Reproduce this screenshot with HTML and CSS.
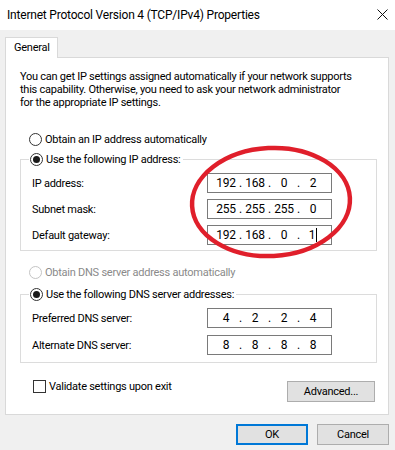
FILE: index.html
```html
<!DOCTYPE html>
<html lang="en">
<head>
    <meta charset="UTF-8">
    <title>Internet Protocol Version 4 (TCP/IPv4) Properties</title>
    <link rel="stylesheet" href="styles.css">
</head>
<body>
    <div class="window">
        <div class="titlebar">
            <span class="title">Internet Protocol Version 4 (TCP/IPv4) Properties</span>
            <svg class="close" width="11" height="11" viewBox="0 0 11 11">
                <path d="M0.5 0.5 L10.5 10.5 M10.5 0.5 L0.5 10.5" stroke="#111" stroke-width="1" fill="none"/>
            </svg>
        </div>

        <div class="content">
            <div class="tabs">
                <div class="tab">General</div>
            </div>

            <div class="panel">
                <p class="intro">You can get IP settings assigned automatically if your network supports<br>this capability. Otherwise, you need to ask your network administrator<br>for the appropriate IP settings.</p>

                <div class="radio-row first">
                    <span class="radio"></span>
                    <span>Obtain an IP address automatically</span>
                </div>

                <fieldset class="group ip-group">
                    <legend class="radio-row">
                        <span class="radio checked"></span>
                        <span>Use the following IP address:</span>
                    </legend>
                    <div class="field-row">
                        <span class="field-label">IP address:</span>
                        <div class="ip-box">
                            <span class="octet">192</span><span class="dot">.</span><span class="octet">168</span><span class="dot">.</span><span class="octet">0</span><span class="dot">.</span><span class="octet">2</span>
                        </div>
                    </div>
                    <div class="field-row">
                        <span class="field-label">Subnet mask:</span>
                        <div class="ip-box">
                            <span class="octet">255</span><span class="dot">.</span><span class="octet">255</span><span class="dot">.</span><span class="octet">255</span><span class="dot">.</span><span class="octet">0</span>
                        </div>
                    </div>
                    <div class="field-row">
                        <span class="field-label">Default gateway:</span>
                        <div class="ip-box">
                            <span class="octet">192</span><span class="dot">.</span><span class="octet">168</span><span class="dot">.</span><span class="octet">0</span><span class="dot">.</span><span class="octet"><span class="caret">1</span></span>
                        </div>
                    </div>
                </fieldset>

                <div class="radio-row disabled dns-auto">
                    <span class="radio"></span>
                    <span>Obtain DNS server address automatically</span>
                </div>

                <fieldset class="group dns-group">
                    <legend class="radio-row">
                        <span class="radio checked"></span>
                        <span>Use the following DNS server addresses:</span>
                    </legend>
                    <div class="field-row">
                        <span class="field-label">Preferred DNS server:</span>
                        <div class="ip-box">
                            <span class="octet">4</span><span class="dot">.</span><span class="octet">2</span><span class="dot">.</span><span class="octet">2</span><span class="dot">.</span><span class="octet">4</span>
                        </div>
                    </div>
                    <div class="field-row">
                        <span class="field-label">Alternate DNS server:</span>
                        <div class="ip-box">
                            <span class="octet">8</span><span class="dot">.</span><span class="octet">8</span><span class="dot">.</span><span class="octet">8</span><span class="dot">.</span><span class="octet">8</span>
                        </div>
                    </div>
                </fieldset>

                <div class="panel-footer">
                    <div class="check-row">
                        <span class="checkbox"></span>
                        <span>Validate settings upon exit</span>
                    </div>
                    <button class="btn advanced">Advanced...</button>
                </div>
            </div>

            <div class="actions">
                <button class="btn default">OK</button>
                <button class="btn">Cancel</button>
            </div>
        </div>

        <!-- red marker drawn over the static address fields -->
        <svg class="marker" width="395" height="450" viewBox="0 0 395 450">
            <ellipse cx="271" cy="202" rx="79" ry="54" fill="none" stroke="#e01f2b" stroke-width="4.5" transform="rotate(-3 271 202)"/>
        </svg>
    </div>
</body>
</html>
```

FILE: styles.css
```css
body {
    margin: 0;
    font-family: Roboto, "Noto Sans", sans-serif;
    font-size: 11px;
    letter-spacing: -0.25px;
    color: #000;
    background: #f0f0f0;
}
.window {
    position: relative;
    width: 395px;
    height: 450px;
    background: #f0f0f0;
    overflow: hidden;
}
.titlebar {
    height: 30px;
    background: #fff;
    display: flex;
    align-items: center;
    justify-content: space-between;
    padding: 0 7px;
}
.title {
    font-size: 12px;
    letter-spacing: -0.2px;
    line-height: 16px;
}
.close {
    margin-top: -1px;
}
.content {
    padding: 7px 6px 0 5px;
}
.tabs {
    display: flex;
}
.tab {
    position: relative;
    z-index: 1;
    height: 20px;
    line-height: 20px;
    padding: 0 7px 0 8px;
    border: 1px solid #d9d9d9;
    border-bottom: none;
    background: #fff;
    margin-bottom: -1px;
}
.panel {
    box-sizing: border-box;
    height: 358px;
    background: #fff;
    border: 1px solid #d9d9d9;
    padding: 12px 11px 0 14px;
}
.intro {
    margin: 0;
    line-height: 13px;
    white-space: nowrap;
}
.radio-row {
    display: flex;
    align-items: center;
    gap: 3px;
    height: 16px;
}
.radio-row.first {
    margin: 22px 0 4px 9px;
}
.radio {
    box-sizing: border-box;
    width: 13px;
    height: 13px;
    border: 1px solid #333;
    border-radius: 50%;
    display: flex;
    align-items: center;
    justify-content: center;
    background: #fff;
}
.radio.checked::after {
    content: "";
    width: 7px;
    height: 7px;
    border-radius: 50%;
    background: #1a1a1a;
}
.radio-row.disabled {
    color: #8a8a8a;
}
.radio-row.disabled .radio {
    border-color: #c4c4c4;
}
.dns-auto {
    margin: 13px 0 6px 9px;
}
.group {
    margin: 0;
    border: 1px solid #dcdcdc;
    padding: 6px 0 5px 8px;
    width: 357px;
    box-sizing: border-box;
}
.group legend {
    padding: 0 2px 0 1px;
}
.dns-group {
    padding-bottom: 7px;
}
.field-row {
    display: flex;
    align-items: center;
    padding-left: 3px;
    height: 20px;
}
.field-row + .field-row {
    margin-top: 6px;
}
.dns-group .field-row + .field-row {
    margin-top: 7px;
}
.field-label {
    width: 175px;
}
.ip-box {
    box-sizing: border-box;
    width: 125px;
    height: 20px;
    border: 1px solid #7a7a7a;
    display: flex;
    align-items: center;
    padding-left: 7px;
    font-size: 12px;
}
.octet {
    width: 22px;
    text-align: center;
}
.dot {
    width: 7px;
    text-align: center;
}
.caret {
    border-right: 1px solid #000;
    padding-right: 1px;
}
.panel-footer {
    display: flex;
    justify-content: space-between;
    align-items: flex-start;
    margin: 18px 2px 0 13px;
}
.check-row {
    display: flex;
    align-items: center;
    gap: 3px;
    height: 13px;
    margin-top: -1px;
}
.checkbox {
    box-sizing: border-box;
    width: 13px;
    height: 13px;
    border: 1px solid #333;
    background: #fff;
}
.btn {
    box-sizing: border-box;
    width: 72px;
    height: 21px;
    padding: 0;
    font-family: inherit;
    font-size: 11px;
    letter-spacing: -0.25px;
    color: #000;
    background: #e1e1e1;
    border: 1px solid #adadad;
}
.btn.advanced {
    width: 88px;
}
.btn.default {
    border: 2px solid #0078d7;
}
.actions {
    display: flex;
    justify-content: flex-end;
    gap: 9px;
    margin-top: 9px;
}
.marker {
    position: absolute;
    left: 0;
    top: 0;
    pointer-events: none;
}
```
